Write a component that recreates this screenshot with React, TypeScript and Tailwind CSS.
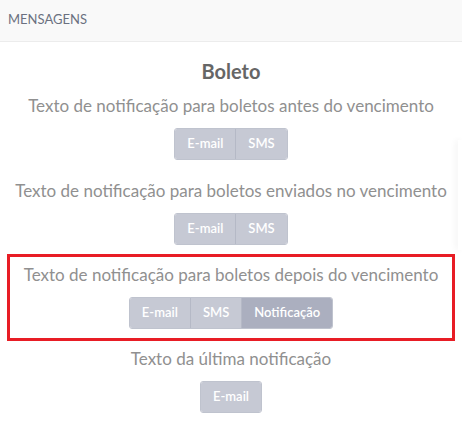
import React from "react";

type Option = { label: string; active?: boolean };

const sections: { title: string; options: Option[]; highlight?: boolean }[] = [
  {
    title: "Texto de notificação para boletos antes do vencimento",
    options: [{ label: "E-mail" }, { label: "SMS" }],
  },
  {
    title: "Texto de notificação para boletos enviados no vencimento",
    options: [{ label: "E-mail" }, { label: "SMS" }],
  },
  {
    title: "Texto de notificação para boletos depois do vencimento",
    options: [{ label: "E-mail" }, { label: "SMS" }, { label: "Notificação", active: true }],
    highlight: true,
  },
  {
    title: "Texto da última notificação",
    options: [{ label: "E-mail" }],
  },
];

function ButtonGroup({ options }: { options: Option[] }) {
  return (
    <div className="mt-[10px] flex justify-center">
      <div className="flex h-[32px] overflow-hidden rounded-[3px] border border-[#bfc3ce]">
        {options.map((opt, i) => (
          <div
            key={i}
            className={
              "flex items-center px-[12px] text-[13px] font-semibold text-white " +
              (i > 0 ? "border-l border-[#b5b9c6] " : "") +
              (opt.active ? "bg-[#abafbf] border-[#9ea3b4]" : "bg-[#c6c9d4]")
            }
          >
            {opt.label}
          </div>
        ))}
      </div>
    </div>
  );
}

export default function App() {
  return (
    <div className="relative h-[425px] w-[462px] overflow-hidden bg-white font-['Lato',sans-serif]">
      <div className="flex h-[42px] items-center border-b border-[#ececec] bg-[#f9f9f9] px-[8px] pb-[2px]">
        <span className="text-[13px] text-[#6b7180]">MENSAGENS</span>
      </div>
      <div className="pt-[17px] text-center">
        <h2 className="text-[20px] font-bold leading-[24px] text-[#666666]">Boleto</h2>
        {sections.map((s, i) => (
          <div
            key={i}
            className={
              s.highlight
                ? "mx-[7px] mt-[9px] border-[3px] border-[#e81d25] pt-[6px] pb-[9px]"
                : i === 0
                ? "mt-[11px]"
                : i === 1
                ? "mt-[19px]"
                : "mt-[6px]"
            }
          >
            <p className="text-[17px] leading-[24px] text-[#909090]">{s.title}</p>
            <ButtonGroup options={s.options} />
          </div>
        ))}
      </div>
      <div className="absolute right-0 top-[140px] h-[110px] w-[4px] shadow-[-2px_0_6px_rgba(0,0,0,0.06)]" />
    </div>
  );
}
